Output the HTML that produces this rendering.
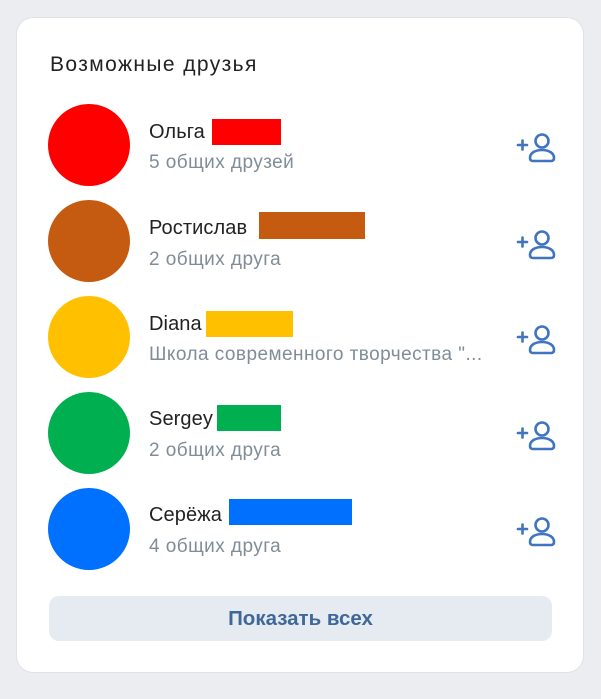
<!DOCTYPE html>
<html><head><meta charset="utf-8"><style>
body{margin:0;width:601px;height:699px;background:#ebedf0;font-family:"Liberation Sans",sans-serif;position:relative;overflow:hidden}
.card{position:absolute;left:17px;top:18px;width:566px;height:654px;background:#fff;border-radius:16px;box-shadow:0 0 0 1px #dfe2e6}
.t{position:absolute;left:50px;top:51px;font-size:21px;line-height:28px;color:#222;letter-spacing:1.4px;white-space:nowrap}
.av{position:absolute;left:48px;width:82px;height:82px;border-radius:50%}
.n{position:absolute;left:149px;font-size:20px;line-height:24px;color:#222;white-space:nowrap;letter-spacing:.1px}
.s{position:absolute;left:149px;font-size:19px;line-height:24px;color:#818c99;white-space:nowrap;letter-spacing:.45px}
.r{position:absolute}
.ic{position:absolute;left:515px;width:42px;height:34px}
.btn{position:absolute;left:49px;top:596px;width:503px;height:45px;background:#e5ebf1;border-radius:10px;text-align:center;line-height:45px;font-size:20.5px;font-weight:bold;color:#3f6797}
</style></head><body>
<div class="card"></div>
<div class="t">Возможные друзья</div>

<div class="av" style="top:104px;background:#f00"></div>
<div class="n" style="top:120px">Ольга</div><div class="r" style="left:212px;top:119px;width:69px;height:26px;background:#f00"></div>
<div class="s" style="top:151px">5 общих друзей</div>

<div class="av" style="top:200px;background:#c55a11"></div>
<div class="n" style="top:216px">Ростислав</div><div class="r" style="left:259px;top:212px;width:106px;height:27px;background:#c55a11"></div>
<div class="s" style="top:248px">2 общих друга</div>

<div class="av" style="top:296px;background:#ffc000"></div>
<div class="n" style="top:312px">Diana</div><div class="r" style="left:206px;top:311px;width:87px;height:26px;background:#ffc000"></div>
<div class="s" style="top:343px">Школа современного творчества "...</div>

<div class="av" style="top:392px;background:#00b050"></div>
<div class="n" style="top:407px">Sergey</div><div class="r" style="left:217px;top:405px;width:64px;height:26px;background:#00b050"></div>
<div class="s" style="top:439px">2 общих друга</div>

<div class="av" style="top:488px;background:#0070ff"></div>
<div class="n" style="top:503px">Серёжа</div><div class="r" style="left:229px;top:499px;width:123px;height:26px;background:#0070ff"></div>
<div class="s" style="top:535px">4 общих друга</div>

<svg width="0" height="0" style="position:absolute"><defs><g id="u" fill="none" stroke="#3f74c0" stroke-width="2.6" stroke-linecap="round"><path d="M3 14h9M7.5 9.5v9"/><circle cx="27" cy="10" r="6.5"/><path d="M15 27c0-5 5-8 12-8s12 3 12 8c0 2-1 3-3 3H18c-2 0-3-1-3-3z"/></g></defs></svg>
<svg class="ic" style="top:131px" viewBox="0 0 42 34"><use href="#u"/></svg>
<svg class="ic" style="top:228px" viewBox="0 0 42 34"><use href="#u"/></svg>
<svg class="ic" style="top:323px" viewBox="0 0 42 34"><use href="#u"/></svg>
<svg class="ic" style="top:419px" viewBox="0 0 42 34"><use href="#u"/></svg>
<svg class="ic" style="top:515px" viewBox="0 0 42 34"><use href="#u"/></svg>

<div class="btn">Показать всех</div>
</body></html>
